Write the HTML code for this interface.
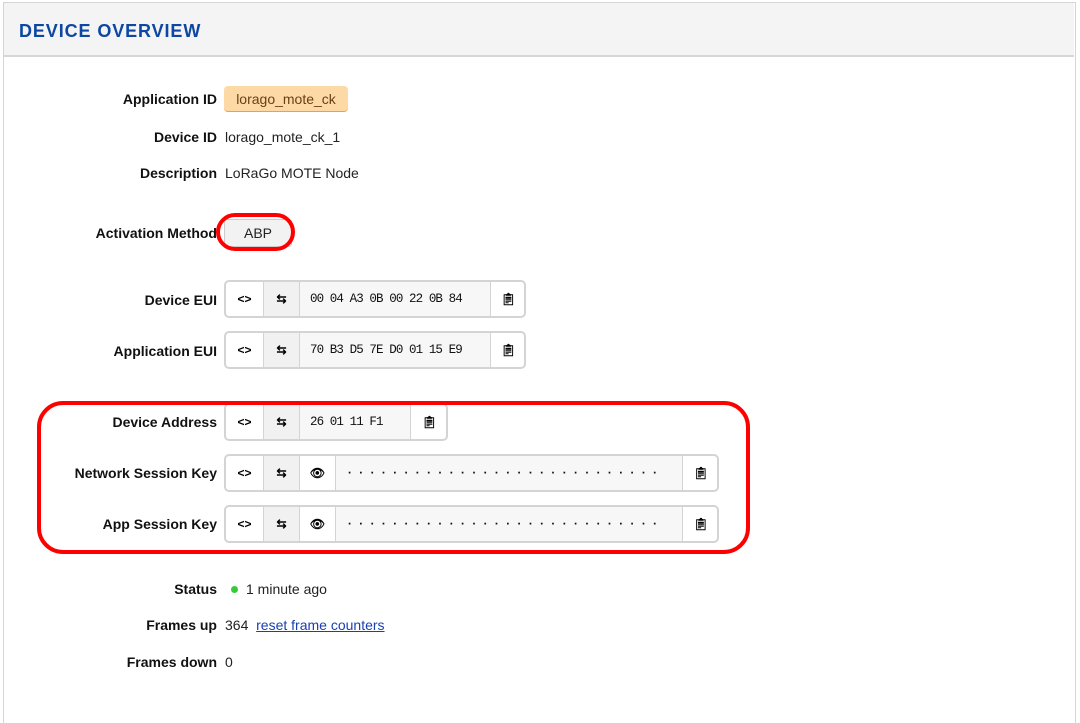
<!DOCTYPE html>
<html><head><meta charset="utf-8"><style>
body{margin:0;width:1080px;height:713px;background:#fff;font-family:"Liberation Sans",sans-serif;position:relative;overflow:hidden}
.frame{position:absolute;left:3px;top:2px;width:1071px;height:720px;border:1px solid #d5d5d5;border-bottom:none}
.hdr{position:absolute;left:4px;top:3px;width:1070px;height:52px;background:#f4f4f4;border-bottom:2px solid #d6d6d6}
.hdr span{position:absolute;left:15px;top:18px;font-size:18px;font-weight:bold;letter-spacing:0.9px;color:#0d47a1}
.l{position:absolute;right:863px;font-size:14px;font-weight:bold;color:#111;transform:translateY(-50%);white-space:nowrap}
.v{position:absolute;left:225px;font-size:14px;color:#222;transform:translateY(-50%);white-space:nowrap}
.chip{position:absolute;left:224px;top:86px;width:124px;height:26px;background:#fdd9a6;border-radius:4px;border-bottom:1px solid #f0a040;box-sizing:border-box;font-size:14px;color:#6a3f14;text-align:center;line-height:26px}
.btn{position:absolute;left:224px;top:219px;width:68px;height:28px;background:#f2f2f2;border:1px solid #ccc;border-radius:3px;box-sizing:border-box;font-size:14px;text-align:center;line-height:26px;color:#222}
.grp{position:absolute;left:224px;height:38px;border:2px solid #d4d4d4;border-radius:5px;box-sizing:border-box;display:flex;background:#fff;overflow:hidden}
.grp div{height:100%;display:flex;align-items:center;justify-content:center;border-right:1px solid #d4d4d4;box-sizing:border-box;font-size:12px;font-weight:bold;flex:none;white-space:nowrap;overflow:hidden}
.grp div:last-child{border-right:none}
.g{background:#f1f1f1}
.val{background:#f7f7f7;justify-content:flex-start!important;padding-left:10px;font-family:"Liberation Mono",monospace;font-weight:normal!important;font-size:12.5px!important;letter-spacing:-0.9px;color:#111}
.dots{font-weight:bold!important;font-size:12px!important;letter-spacing:4.1px}
.red{position:absolute;border:4px solid #f00;box-sizing:border-box}
a{color:#1a3fb0}
</style></head><body>
<div class="frame"></div>
<div class="hdr"><span>DEVICE OVERVIEW</span></div>

<div class="l" style="top:99px">Application ID</div><div class="chip">lorago_mote_ck</div>
<div class="l" style="top:137px">Device ID</div><div class="v" style="top:137px">lorago_mote_ck_1</div>
<div class="l" style="top:173px">Description</div><div class="v" style="top:173px">LoRaGo MOTE Node</div>
<div class="l" style="top:233px">Activation Method</div><div class="btn">ABP</div>
<div class="red" style="left:216px;top:213px;width:79px;height:38px;border-radius:19px"></div>

<div class="l" style="top:300px">Device EUI</div>
<div class="grp" style="top:280px;width:302px"><div style="width:38px">&lt;&gt;</div><div class="g" style="width:36px">⇆</div><div class="val" style="width:191px">00 04 A3 0B 00 22 0B 84</div><div style="width:35px">📋︎</div></div>
<div class="l" style="top:351px">Application EUI</div>
<div class="grp" style="top:331px;width:302px"><div style="width:38px">&lt;&gt;</div><div class="g" style="width:36px">⇆</div><div class="val" style="width:191px">70 B3 D5 7E D0 01 15 E9</div><div style="width:35px">📋︎</div></div>

<div class="l" style="top:422px">Device Address</div>
<div class="grp" style="top:403px;width:224px"><div style="width:38px">&lt;&gt;</div><div class="g" style="width:36px">⇆</div><div class="val" style="width:111px">26 01 11 F1</div><div style="width:37px">📋︎</div></div>
<div class="l" style="top:473px">Network Session Key</div>
<div class="grp" style="top:454px;width:495px"><div style="width:38px">&lt;&gt;</div><div class="g" style="width:36px">⇆</div><div style="width:36px">👁︎</div><div class="val dots" style="width:347px">····························</div><div style="width:36px">📋︎</div></div>
<div class="l" style="top:524px">App Session Key</div>
<div class="grp" style="top:505px;width:495px"><div style="width:38px">&lt;&gt;</div><div class="g" style="width:36px">⇆</div><div style="width:36px">👁︎</div><div class="val dots" style="width:347px">····························</div><div style="width:36px">📋︎</div></div>
<div class="red" style="left:37px;top:401px;width:713px;height:153px;border-radius:26px"></div>

<div class="l" style="top:589px">Status</div>
<div style="position:absolute;left:231px;top:586px;width:7px;height:7px;border-radius:50%;background:#3c3"></div>
<div class="v" style="top:589px;left:246px">1 minute ago</div>
<div class="l" style="top:625px">Frames up</div><div class="v" style="top:625px">364 &nbsp;<a href="#">reset frame counters</a></div>
<div class="l" style="top:662px">Frames down</div><div class="v" style="top:662px">0</div>
</body></html>
